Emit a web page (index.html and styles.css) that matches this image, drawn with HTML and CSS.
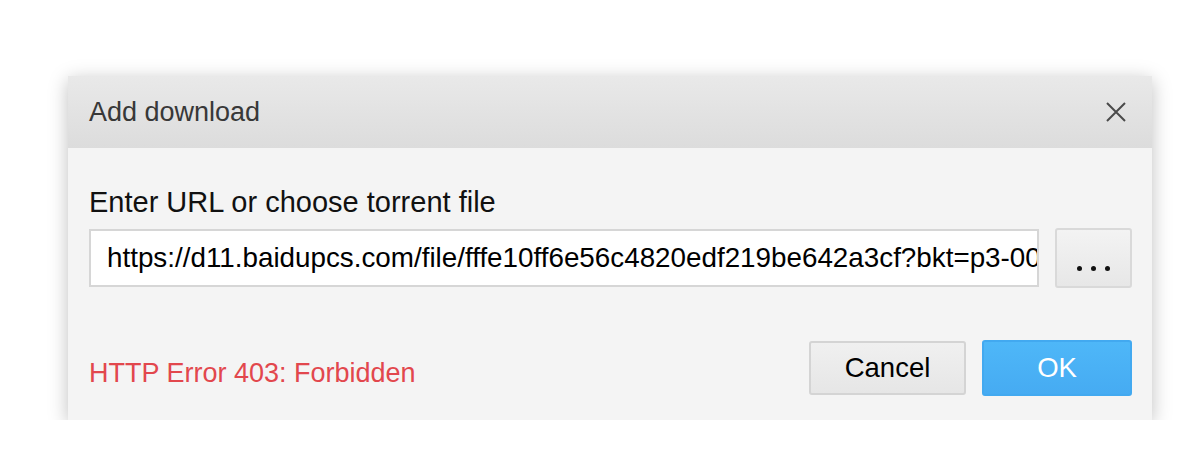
FILE: index.html
```html
<!DOCTYPE html>
<html>
<head>
<meta charset="utf-8">
<link rel="stylesheet" href="styles.css">
</head>
<body>
<div class="page">
  <div class="dialog">
    <div class="header">
      <span class="title">Add download</span>
      <svg class="close" width="20" height="20" viewBox="0 0 20 20"><path d="M1 1L19 19M19 1L1 19" stroke="#4a4a4a" stroke-width="2" fill="none"/></svg>
    </div>
    <div class="body">
      <div class="label">Enter URL or choose torrent file</div>
      <div class="input-row">
        <div class="url-input">https://d11.baidupcs.com/file/fffe10ff6e56c4820edf219be642a3cf?bkt=p3-0000a1c9e5f3d2b7e8f6c41a0</div>
        <div class="browse"><span class="dot"></span><span class="dot"></span><span class="dot"></span></div>
      </div>
      <div class="footer">
        <div class="error">HTTP Error 403: Forbidden</div>
        <div class="buttons">
          <div class="btn cancel">Cancel</div>
          <div class="btn ok">OK</div>
        </div>
      </div>
    </div>
  </div>
</div>
</body>
</html>
```

FILE: styles.css
```css
html, body {
  margin: 0;
  padding: 0;
  background: #ffffff;
}
.page {
  padding: 76px 0 0 68px;
  font-family: "Liberation Sans", Arial, sans-serif;
}
.dialog {
  width: 1084px;
  height: 344px;
  background: #f4f4f4;
  box-shadow: 0 4px 18px rgba(0, 0, 0, 0.25);
  display: flex;
  flex-direction: column;
}
.header {
  height: 72px;
  background: linear-gradient(#e9e9e9, #dcdcdc);
  display: flex;
  align-items: center;
  justify-content: space-between;
  padding: 0 26px 0 21px;
}
.title {
  font-size: 27px;
  line-height: 32px;
  color: #383838;
}
.close {
  display: block;
}
.body {
  padding: 38px 20px 0 21px;
  display: flex;
  flex-direction: column;
}
.label {
  font-size: 29px;
  line-height: 32px;
  color: #111;
}
.input-row {
  margin-top: 11px;
  display: flex;
  align-items: flex-start;
  gap: 16px;
}
.url-input {
  box-sizing: border-box;
  width: 950px;
  height: 58px;
  border: 2px solid #d6d6d6;
  background: #fff;
  padding: 0 14px 0 16px;
  font-size: 27.8px;
  line-height: 54px;
  white-space: nowrap;
  overflow: hidden;
  color: #000;
}
.browse {
  box-sizing: border-box;
  width: 77px;
  height: 60px;
  margin-top: -1px;
  border: 2px solid #d9d9d9;
  border-radius: 3px;
  background: linear-gradient(#f3f3f3, #e7e7e7);
  display: flex;
  justify-content: center;
  align-items: flex-end;
  gap: 9px;
  padding-bottom: 15px;
}
.dot {
  width: 5px;
  height: 5px;
  border-radius: 50%;
  background: #111;
}
.footer {
  margin-top: 52px;
  display: flex;
  justify-content: space-between;
  align-items: center;
}
.error {
  font-size: 27px;
  line-height: 32px;
  color: #e2474d;
  padding-top: 9px;
}
.buttons {
  display: flex;
  align-items: center;
  gap: 16px;
}
.btn {
  box-sizing: border-box;
  display: flex;
  align-items: center;
  justify-content: center;
  font-size: 27.5px;
  border-radius: 3px;
}
.cancel {
  width: 157px;
  height: 54px;
  border: 2px solid #d4d4d4;
  background: linear-gradient(#f0f0f0, #e6e6e6);
  color: #000;
}
.ok {
  width: 150px;
  height: 56px;
  border: 2px solid #42a9f0;
  background: linear-gradient(#4eb7f8, #46abf2);
  color: #fff;
}
```
